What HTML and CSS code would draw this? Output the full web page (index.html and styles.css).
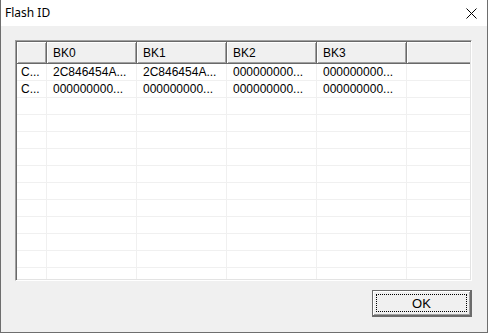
FILE: index.html
```html
<!DOCTYPE html>
<html>
<head>
<meta charset="utf-8">
<link rel="stylesheet" href="styles.css">
</head>
<body>
<div class="window">
  <div class="titlebar">
    <span class="title">Flash ID</span>
    <svg class="close" width="11" height="11" viewBox="0 0 11 11"><path d="M0.5 0.5 L10.5 10.5 M10.5 0.5 L0.5 10.5" stroke="#000" stroke-width="1" fill="none"/></svg>
  </div>
  <div class="client">
    <div class="list">
      <div class="header">
        <div class="hcell c0"></div>
        <div class="hcell c1">BK0</div>
        <div class="hcell c1">BK1</div>
        <div class="hcell c1">BK2</div>
        <div class="hcell c1">BK3</div>
        <div class="hcell fill"></div>
      </div>
      <div class="rows">
        <div class="row"><div class="cell c0">C...</div><div class="cell c1">2C846454A...</div><div class="cell c1">2C846454A...</div><div class="cell c1">000000000...</div><div class="cell c1">000000000...</div><div class="cell fill"></div></div>
        <div class="row"><div class="cell c0">C...</div><div class="cell c1">000000000...</div><div class="cell c1">000000000...</div><div class="cell c1">000000000...</div><div class="cell c1">000000000...</div><div class="cell fill"></div></div>
        <div class="row"><div class="cell c0"></div><div class="cell c1"></div><div class="cell c1"></div><div class="cell c1"></div><div class="cell c1"></div><div class="cell fill"></div></div>
        <div class="row"><div class="cell c0"></div><div class="cell c1"></div><div class="cell c1"></div><div class="cell c1"></div><div class="cell c1"></div><div class="cell fill"></div></div>
        <div class="row"><div class="cell c0"></div><div class="cell c1"></div><div class="cell c1"></div><div class="cell c1"></div><div class="cell c1"></div><div class="cell fill"></div></div>
        <div class="row"><div class="cell c0"></div><div class="cell c1"></div><div class="cell c1"></div><div class="cell c1"></div><div class="cell c1"></div><div class="cell fill"></div></div>
        <div class="row"><div class="cell c0"></div><div class="cell c1"></div><div class="cell c1"></div><div class="cell c1"></div><div class="cell c1"></div><div class="cell fill"></div></div>
        <div class="row"><div class="cell c0"></div><div class="cell c1"></div><div class="cell c1"></div><div class="cell c1"></div><div class="cell c1"></div><div class="cell fill"></div></div>
        <div class="row"><div class="cell c0"></div><div class="cell c1"></div><div class="cell c1"></div><div class="cell c1"></div><div class="cell c1"></div><div class="cell fill"></div></div>
        <div class="row"><div class="cell c0"></div><div class="cell c1"></div><div class="cell c1"></div><div class="cell c1"></div><div class="cell c1"></div><div class="cell fill"></div></div>
        <div class="row"><div class="cell c0"></div><div class="cell c1"></div><div class="cell c1"></div><div class="cell c1"></div><div class="cell c1"></div><div class="cell fill"></div></div>
        <div class="row"><div class="cell c0"></div><div class="cell c1"></div><div class="cell c1"></div><div class="cell c1"></div><div class="cell c1"></div><div class="cell fill"></div></div>
        <div class="row"><div class="cell c0"></div><div class="cell c1"></div><div class="cell c1"></div><div class="cell c1"></div><div class="cell c1"></div><div class="cell fill"></div></div>
        <div class="row"><div class="cell c0"></div><div class="cell c1"></div><div class="cell c1"></div><div class="cell c1"></div><div class="cell c1"></div><div class="cell fill"></div></div>
      </div>
    </div>
    <div class="buttons">
      <button class="btn"><span class="focus">OK</span></button>
    </div>
  </div>
</div>
</body>
</html>
```

FILE: styles.css
```css
* { box-sizing: border-box; }
html, body {
  margin: 0;
  padding: 0;
  width: 488px;
  height: 333px;
  overflow: hidden;
  background: #f0f0f0;
}
.window {
  width: 488px;
  height: 333px;
  border-left: 1px solid #6e6e6e;
  border-right: 1px solid #6e6e6e;
  border-bottom: 1px solid #6e6e6e;
  background: #f0f0f0;
  display: flex;
  flex-direction: column;
}
.titlebar {
  height: 26px;
  flex: none;
  background: #fff;
  display: flex;
  align-items: center;
  justify-content: space-between;
  padding: 0 10px 0 4px;
}
.title {
  font-family: "Noto Sans", "Open Sans", sans-serif;
  font-size: 12px;
  color: #000;
  position: relative;
  top: -1px;
}
.close { display: block; }
.client {
  flex: 1;
  display: flex;
  flex-direction: column;
  padding: 14px 15px 15px 14px;
}
.list {
  height: 241px;
  flex: none;
  background: #fff;
  border-top: 1px solid #a0a0a0;
  border-left: 1px solid #a0a0a0;
  border-right: 1px solid #fff;
  border-bottom: 1px solid #fff;
  box-shadow: inset 1px 1px #696969, inset -1px -1px #e3e3e3;
  padding: 1px;
  overflow: hidden;
  display: flex;
  flex-direction: column;
  font-family: "Liberation Sans", Arial, sans-serif;
  font-size: 12px;
  color: #000;
}
.header {
  display: flex;
  height: 22px;
  flex: none;
}
.hcell {
  background: #f0f0f0;
  border-right: 1px solid #696969;
  border-bottom: 1px solid #696969;
  box-shadow: inset 1px 1px #fff, inset -1px -1px #a0a0a0;
  display: flex;
  align-items: center;
  padding-left: 6px;
  white-space: nowrap;
}
.hcell.fill {
  border-right: none;
  box-shadow: inset 1px 1px #fff, inset 0 -1px #a0a0a0;
}
.c0 { width: 30px; flex: none; }
.c1 { width: 90px; flex: none; }
.fill { flex: 1; }
.rows {
  flex: 1;
  overflow: hidden;
}
.row {
  display: flex;
  height: 17px;
}
.cell {
  border-right: 1px solid #f0f0f0;
  border-bottom: 1px solid #f0f0f0;
  display: flex;
  align-items: center;
  padding-left: 6px;
  white-space: nowrap;
  overflow: hidden;
}
.cell.c0 { padding-left: 4px; }
.cell.fill { border-right: none; }
.buttons {
  display: flex;
  justify-content: flex-end;
  margin-top: 9px;
}
.btn {
  width: 100px;
  height: 27px;
  margin: 0;
  padding: 3px;
  background: #f0f0f0;
  border: 1px solid #6b6b6b;
  border-right-width: 2px;
  border-bottom-width: 2px;
  box-shadow: inset 1px 1px #fff, inset -1px -1px #a0a0a0;
  font-family: "Liberation Sans", Arial, sans-serif;
  font-size: 13px;
  color: #000;
  display: flex;
}
.focus {
  flex: 1;
  border: 1px dotted #000;
  display: flex;
  align-items: center;
  justify-content: center;
}
```
